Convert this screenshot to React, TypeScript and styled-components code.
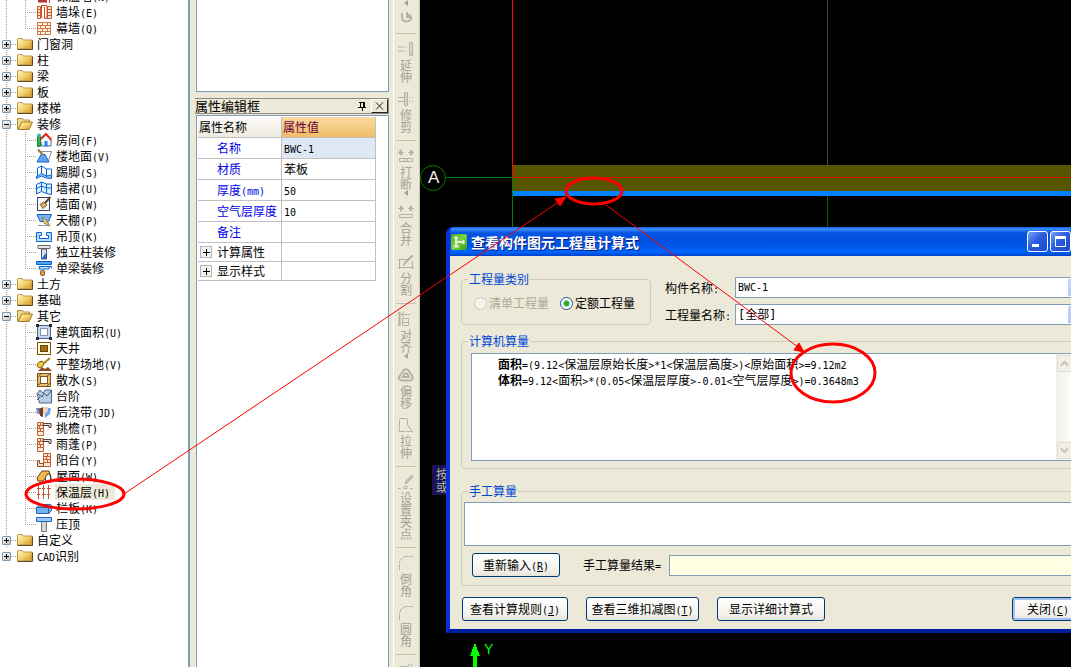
import React, { Fragment, ReactNode } from "react";
import styled, { createGlobalStyle, css } from "styled-components";

const GlobalStyle = createGlobalStyle`
  *, *::before, *::after { box-sizing: border-box; }
  body {
    margin: 0;
    background: #ece9d8;
    font-family: "Noto Sans CJK SC", sans-serif;
    font-size: 12px;
    line-height: 16px;
    color: #000;
  }
  ul { list-style: none; margin: 0; padding: 0; }
  button, input, select, textarea { font: inherit; color: inherit; margin: 0; }
`;

/* ---------- mixed Chinese / Latin text ---------- */

const Latin = styled.span`
  font-family: "DejaVu Sans Mono", monospace;
  font-size: 10px;
  line-height: 10px;
  white-space: pre;
`;

function Mixed({ text, hotkey }: { text: string; hotkey?: string }) {
  const parts = text.split(/([\x20-\x7e]+)/).filter(Boolean);
  return (
    <>
      {parts.map((part, i) => {
        if (!/^[\x20-\x7e]/.test(part)) return <Fragment key={i}>{part}</Fragment>;
        if (hotkey && part.includes(hotkey)) {
          const [before, after] = part.split(hotkey);
          return (
            <Latin key={i}>
              {before}
              <u>{hotkey}</u>
              {after}
            </Latin>
          );
        }
        return <Latin key={i}>{part}</Latin>;
      })}
    </>
  );
}

/* ---------- page ---------- */

const Page = styled.div`
  position: relative;
  display: grid;
  grid-template-columns: 190px 204px 26px minmax(0, 1fr);
  grid-template-rows: minmax(0, 1fr);
  height: 100vh;
  overflow: hidden;
`;

/* ---------- component tree ---------- */

const dots = "#a5a295";

const TreePanel = styled.nav`
  background: #fff;
  border-right: 2px solid #7f9db9;
  overflow: hidden;
`;

const Tree = styled.ul`
  margin-top: -12px;
`;

const Branch = styled.li<{ $last?: boolean }>`
  background: ${(p) =>
    p.$last
      ? "none"
      : `linear-gradient(${dots} 50%, transparent 50%) 6px 0 / 1px 2px repeat-y`};
`;

const TreeRow = styled.div`
  display: flex;
  align-items: center;
  height: 16px;
  padding-left: 2px;
`;

const Leaf = styled.li<{ $last?: boolean }>`
  display: flex;
  align-items: center;
  height: 16px;
  padding-left: 25px;
  background: ${(p) => (p.$last ? "linear-gradient(#fff, #fff) 25px 9px / 1px 7px no-repeat," : "")}
    linear-gradient(${dots} 50%, transparent 50%) 25px 0 / 1px 2px repeat-y;
`;

const Connector = styled.span<{ $width: number }>`
  flex: none;
  width: ${(p) => p.$width}px;
  height: 1px;
  background: repeating-linear-gradient(90deg, ${dots} 0 1px, transparent 1px 2px);
`;

const Expander = styled.button`
  flex: none;
  display: block;
  width: 9px;
  height: 9px;
  padding: 0;
  border: 1px solid #7898b5;
  border-radius: 1px;
  background: linear-gradient(135deg, #fff, #c9c2b1);
  svg { display: block; }
`;

const TreeLabel = styled.a<{ $selected?: boolean }>`
  margin-left: 3px;
  padding: 0 5px 0 1px;
  line-height: 16px;
  white-space: nowrap;
  color: #000;
  text-decoration: none;
  background: ${(p) => (p.$selected ? "#ece9d8" : "transparent")};
`;

const Glyph = styled.svg`
  flex: none;
  display: block;
`;

const FolderIcon = ({ open }: { open?: boolean }) => (
  <Glyph width="16" height="16" viewBox="0 0 16 16">
    <defs>
      <linearGradient id="fold" x1="0" y1="0" x2="1" y2="1">
        <stop offset="0" stopColor="#fff3b5" />
        <stop offset=".5" stopColor="#f6d36e" />
        <stop offset="1" stopColor="#c8922a" />
      </linearGradient>
    </defs>
    {open ? (
      <>
        <path d="M.5 13V2.500h5l1 1.500h6V6" fill="#f3dc8e" stroke="#b08c3e" />
        <path d="M1 13.500 4.500 6h11L12 13.500z" fill="url(#fold)" stroke="#a5762a" />
      </>
    ) : (
      <>
        <path d="M.5 13V3l1-.5h4l1 1.500h8.500V13z" fill="url(#fold)" stroke="#b8934a" />
        <path d="M.5 13.500h15V4.500" fill="none" stroke="#5f4a22" />
      </>
    )}
  </Glyph>
);

const orange = "#c0622c";

const drawings: Record<string, ReactNode> = {
  insulatedWall: (
    <>
      <path d="M2 13h8" stroke="#b03a2e" strokeWidth="3" />
      <path d="M10.500 0v15M13.500 0v15" stroke="#d33" />
    </>
  ),
  pier: (
    <>
      <path d="M1.500 2.500h3v12h-3zM11.500 2.500h4v12h-4z" fill="#fbe3cf" stroke={orange} />
      <path d="M1 5.500h4M1 8.500h4M1 11.500h4M11 5.500h4M11 8.500h4M11 11.500h4" stroke={orange} />
      <path d="M5 1.500h6v13H8.500V4M5.500 2v12M8.500 3v11" fill="none" stroke="#d4471c" />
    </>
  ),
  curtain: (
    <>
      <rect x="1.500" y="2.500" width="13" height="12" fill="#fff2e6" stroke="#cf7a45" />
      <path d="M1 5.500h14M1 8.500h14M1 11.500h14M6.500 3v3M11.500 3v3M4.500 6v3M9.500 6v3M6.500 9v3M11.500 9v3M4.500 12v3M9.500 12v3" stroke="#cf7a45" />
    </>
  ),
  room: (
    <>
      <path d="M4 8 10 3l5 5v6H6z" fill="#f3f8ff" stroke="#3a6cb0" />
      <path d="M4 7.500 10 2l5.500 6" fill="none" stroke="#e0301e" strokeWidth="2" />
      <path d="M1.500 4.500h3v10h-3z" fill="#37b24d" stroke="#1d7d33" />
      <path d="M8.500 9h3v5.500h-3z" fill="#2f7fe0" />
      <circle cx="3" cy="3.500" r="2" fill="#38b8a8" />
    </>
  ),
  floor: (
    <>
      <path d="M4.500 3.500h11l-3 9" fill="#fff" stroke="#8a94a3" />
      <path d="M5 6.500h4l4 7.500H1z" fill="#62a3f2" stroke="#1760c8" />
      <path d="M2 1.500 7 7" stroke="#9a7a3c" strokeWidth="2" />
    </>
  ),
  skirting: (
    <>
      <path d="M.5 12.500 5.500 9.500l5 2.500 5-1v3.500l-5-.5-5-2-5 2.500z" fill="#8cc8fa" stroke="#0d63d3" />
      <path d="M1.500 13V4L5.500 2v8M5.500 2l5 3h5v7M10.500 5v8" fill="none" stroke="#0d63d3" />
    </>
  ),
  dado: (
    <>
      <path d="M.5 4.500 5.500 2l5 2h5v10.500l-5-1-5-2-5 2.500z" fill="#d9effe" stroke="#0d63d3" />
      <path d="M.5 8.500 5.500 6l5 2h5M5.500 2v9M10.500 4v9" fill="none" stroke="#0d63d3" />
    </>
  ),
  wallFace: (
    <>
      <rect x="1.500" y="1.500" width="12" height="13" fill="#f3f6ff" stroke="#3c4660" />
      <path d="M4 8.500 8 6l3 3-4 3.500z" fill="#d5b064" stroke="#866426" />
      <path d="M9 7l5.500-6" stroke="#5c4a28" strokeWidth="2" />
    </>
  ),
  ceiling: (
    <>
      <path d="M1 2.500h14.500l-3 7H4z" fill="#78b2f6" stroke="#1760c8" />
      <path d="M2 13.500h12" stroke="#8a94a3" />
      <path d="M6 5l4 3 4 6-6-3z" fill="#ead07c" stroke="#9a7a3c" />
    </>
  ),
  suspended: (
    <path d="M.5 4.500h5v3h-2v3h9v-3h-2v-3h5v9H.5z" fill="#b8dcfb" stroke="#0d63d3" />
  ),
  column: (
    <>
      <path d="M2 1.500h12v3H2z" fill="#e8e8e8" stroke="#666" />
      <path d="M5.500 5h5v10h-5z" fill="#cfe0f5" stroke="#556" />
      <path d="M6 14l4-5v6H6z" fill="#1f6fd0" />
    </>
  ),
  beam: (
    <>
      <path d="M.5 1.500h15v3H.5z" fill="#4fa0f4" stroke="#0d5fc8" />
      <path d="M3 6.500h10v2.500H3z" fill="#cde4fb" stroke="#0d63d3" />
      <path d="M13 6.500h2.500v2" fill="none" stroke="#0d63d3" />
      <rect x="4.500" y="10.500" width="4" height="5" rx="1" fill="#d69a58" stroke="#8d5a24" />
    </>
  ),
  area: (
    <>
      <rect x="1.500" y="1.500" width="13" height="13" fill="#c8d8ee" stroke="#50627d" />
      <rect x="4.500" y="4.500" width="7" height="7" fill="#fff" stroke="#8294ad" />
      <path d="M0 0h3v3H0zM13 0h3v3h-3zM0 13h3v3H0zM13 13h3v3h-3z" fill="#222b3a" />
    </>
  ),
  patio: (
    <>
      <rect x="1.500" y="2.500" width="13" height="12" fill="#fff7e0" stroke="#7c5514" />
      <rect x="4.500" y="5.500" width="7" height="6" fill="#a06f14" stroke="#6b470a" />
    </>
  ),
  levelling: (
    <>
      <path d="M2 15l4-4 3 2 3-2 4 4z" fill="#8d4a1e" />
      <path d="M7 8l7-6" stroke="#a98522" strokeWidth="2" />
      <ellipse cx="4.500" cy="8.500" rx="3.500" ry="2.500" fill="#f2cf3a" stroke="#8a6c12" transform="rotate(-40 4.500 8.500)" />
    </>
  ),
  apron: (
    <>
      <rect x="1.500" y="1.500" width="13" height="13" fill="#e8bf78" stroke="#7c5514" />
      <rect x="4.500" y="4.500" width="7" height="7" fill="#fff" stroke="#7c5514" />
      <path d="M2 5l3-3M2 13l3-2M11 4l3-2M11 14l3-3" stroke="#7c5514" />
    </>
  ),
  steps: (
    <>
      <path d="M1 5.500 4 2l3 3 2-3h6.500v13H3.500z" fill="#b9cde6" stroke="#4d6585" />
      <path d="M2 6l4 3 2-4 3 3 4-5M1 12l3-3" fill="none" stroke="#3e5575" />
    </>
  ),
  strip: (
    <>
      <path d="M0 4h5v6H1z" fill="#7b8fc0" />
      <path d="M8 4h7l-1 6-5 4z" fill="#6ea6ea" />
      <path d="M3 5l4-2v10l-3-1z" fill="#7a3e1c" />
      <path d="M7 3h5v4l-3 3H7z" fill="#e9d7c4" />
    </>
  ),
  eaves: (
    <>
      <path d="M1.500 2.500h6v13h-6z" fill="#fde6d6" stroke={orange} />
      <path d="M1 5.500h6M1 8.500h6M1 11.500h6M4.500 3v3M3.500 6v3M4.500 9v3" stroke={orange} />
      <path d="M7 3.500h8v4h-2v-2H7z" fill="#e9ded2" stroke="#5d4434" />
    </>
  ),
  balcony: (
    <>
      <path d="M7.500 1.500h7v13h-7z" fill="#fde6d6" stroke={orange} />
      <path d="M7 4.500h8M7 7.500h8M7 10.500h8M11.500 2v3M10.500 5v3M11.500 8v3" stroke={orange} />
      <path d="M1.500 8.500h2v3h4v3h-6z" fill="#f6d9c4" stroke="#8c4a24" />
    </>
  ),
  roof: (
    <>
      <path d="M1 10 6 3h7l2 6v5h-5V9l-3 4H2z" fill="#f5b64c" stroke="#6a4515" />
      <path d="M9.500 9l3-4 2 4v5h-5z" fill="#fff" stroke="#444" />
    </>
  ),
  insulation: (
    <path d="M2.500 1v14M7.500 1v14M12.500 1v14M1 4.500h4M6 4.500h3M11 4.500h4M1 10.500h3M6 10.500h4M11 10.500h3" stroke="#c0562c" fill="none" />
  ),
  railing: (
    <>
      <path d="M.5 7.500 4 4.500h10l1.500 1v5l-2.500 3H.5z" fill="#6fb4f2" stroke="#2868a8" />
      <path d="M.5 7.500h12v6M12.500 7.500l3-2" fill="none" stroke="#2868a8" />
    </>
  ),
  coping: (
    <>
      <path d="M5.500 5h5v10.500h-5z" fill="#d8d8d8" stroke="#777" />
      <path d="M.5 1.500h15v4H.5z" fill="#9ccbfb" stroke="#1666cc" />
    </>
  ),
};

type LeafData = [icon: string, label: string];
type GroupData = { label: string; children?: LeafData[] };

const wallLeaves: LeafData[] = [
  ["insulatedWall", "保温墙(N)"],
  ["pier", "墙垛(E)"],
  ["curtain", "幕墙(Q)"],
];

const groups: GroupData[] = [
  { label: "门窗洞" },
  { label: "柱" },
  { label: "梁" },
  { label: "板" },
  { label: "楼梯" },
  {
    label: "装修",
    children: [
      ["room", "房间(F)"],
      ["floor", "楼地面(V)"],
      ["skirting", "踢脚(S)"],
      ["dado", "墙裙(U)"],
      ["wallFace", "墙面(W)"],
      ["ceiling", "天棚(P)"],
      ["suspended", "吊顶(K)"],
      ["column", "独立柱装修"],
      ["beam", "单梁装修"],
    ],
  },
  { label: "土方" },
  { label: "基础" },
  {
    label: "其它",
    children: [
      ["area", "建筑面积(U)"],
      ["patio", "天井"],
      ["levelling", "平整场地(V)"],
      ["apron", "散水(S)"],
      ["steps", "台阶"],
      ["strip", "后浇带(JD)"],
      ["eaves", "挑檐(T)"],
      ["eaves", "雨蓬(P)"],
      ["balcony", "阳台(Y)"],
      ["roof", "屋面(W)"],
      ["insulation", "保温层(H)"],
      ["railing", "栏板(K)"],
      ["coping", "压顶"],
    ],
  },
  { label: "自定义" },
  { label: "CAD识别" },
];

const Leaves = ({ items }: { items: LeafData[] }) => (
  <ul>
    {items.map(([icon, label], i) => (
      <Leaf key={label} $last={i === items.length - 1}>
        <Connector $width={11} />
        <Glyph width="16" height="16" viewBox="0 0 16 16" fill="none">
          {drawings[icon]}
        </Glyph>
        <TreeLabel href="#" $selected={icon === "insulation"}>
          <Mixed text={label} />
        </TreeLabel>
      </Leaf>
    ))}
  </ul>
);

const ComponentTree = () => (
  <TreePanel aria-label="构件">
    <Tree>
      <Branch>
        <Leaves items={wallLeaves} />
      </Branch>
      {groups.map((g, i) => (
        <Branch key={g.label} $last={i === groups.length - 1}>
          <TreeRow>
            <Expander aria-label={g.label}>
              <svg width="7" height="7" viewBox="0 0 7 7">
                <path d={g.children ? "M1 3.500h5" : "M1 3.500h5M3.500 1v5"} stroke="#000" />
              </svg>
            </Expander>
            <Connector $width={6} />
            <FolderIcon open={!!g.children} />
            <TreeLabel href="#">
              <Mixed text={g.label} />
            </TreeLabel>
          </TreeRow>
          {g.children && <Leaves items={g.children} />}
        </Branch>
      ))}
    </Tree>
  </TreePanel>
);

/* ---------- property editor ---------- */

const PropertyColumn = styled.section`
  display: flex;
  flex-direction: column;
  padding: 0 4px 0 5px;
  border-right: 1px solid #fff;
`;

const ListBox = styled.div`
  flex: none;
  height: 92px;
  margin: 0 0 0 1px;
  background: #fff;
  border: solid #7f9db9;
  border-width: 0 1px 1px;
`;

const PanelTitle = styled.header`
  display: flex;
  align-items: center;
  height: 16px;
  margin: 6px 0 1px;
  border: 1px solid #8d8b80;
  border-left: 0;
  h2 { flex: 1; margin: 0; font-size: 13px; font-weight: 400; line-height: 14px; }
  svg { display: block; }
`;

const PinButton = styled.button`
  width: 16px;
  height: 14px;
  padding: 0;
  border: 0;
  background: none;
`;

const CloseTool = styled.button`
  width: 17px;
  height: 14px;
  margin-left: 2px;
  padding: 0 3px;
  border: 1px solid;
  border-color: #fff #222 #222 #fff;
  background: #ece9d8;
`;

const PropertyBox = styled.div`
  flex: 1;
  margin-left: 1px;
  padding: 1px 0 0 1px;
  background: #fff;
  border: solid #7f9db9;
  border-width: 1px 1px 0;
`;

const PropertyTable = styled.table`
  width: 178px;
  border-collapse: separate;
  border-spacing: 0;
  table-layout: fixed;
`;

const cell = css`
  height: 21px;
  padding: 0 0 0 2px;
  border: solid #c0c0c0;
  border-width: 0 1px 1px 0;
  font-weight: 400;
  line-height: 16px;
  text-align: left;
  white-space: nowrap;
`;

const HeadCell = styled.th<{ $value?: boolean }>`
  ${cell}
  width: ${(p) => (p.$value ? "94px" : "84px")};
  padding-left: 1px;
  color: ${(p) => (p.$value ? "#6b0040" : "#000")};
  background: ${(p) =>
    p.$value
      ? "linear-gradient(#f9dba5, #f0bd62)"
      : "linear-gradient(#fdfcfa, #eeeade)"};
`;

const NameCell = styled.th`
  ${cell}
  padding-left: 19px;
  color: #0000e8;
`;

const ValueCell = styled.td<{ $active?: boolean }>`
  ${cell}
  background: ${(p) => (p.$active ? "#dfe9f6" : "#fff")};
`;

const GroupCell = styled.th`
  ${cell}
  height: 19px;
  line-height: 14px;
`;

const GroupFlex = styled.span`
  display: flex;
  align-items: center;
  gap: 5px;
`;

const GroupToggle = styled.button`
  width: 12px;
  height: 12px;
  padding: 0;
  border: 1px solid #b5b5b5;
  background: #f2f2f0;
  svg { display: block; }
`;

const properties = [
  ["名称", "BWC-1"],
  ["材质", "苯板"],
  ["厚度(mm)", "50"],
  ["空气层厚度", "10"],
  ["备注", ""],
];

const PropertyEditor = () => (
  <PropertyColumn>
    <ListBox />
    <PanelTitle>
      <h2>属性编辑框</h2>
      <PinButton aria-label="固定">
        <svg width="16" height="14" viewBox="0 0 16 14" fill="none" stroke="#000">
          <path d="M6 3.500h6M7.500 3v5M5 8.500h8M9.500 9v3" />
          <path d="M11 3v5" strokeWidth="2" />
        </svg>
      </PinButton>
      <CloseTool aria-label="关闭">
        <svg width="9" height="12" viewBox="0 0 9 12" stroke="#222">
          <path d="M1 2.500 8 9.500M8 2.500 1 9.500" />
        </svg>
      </CloseTool>
    </PanelTitle>
    <PropertyBox>
      <PropertyTable>
        <thead>
          <tr>
            <HeadCell scope="col">属性名称</HeadCell>
            <HeadCell scope="col" $value>属性值</HeadCell>
          </tr>
        </thead>
        <tbody>
          {properties.map(([name, value], i) => (
            <tr key={name}>
              <NameCell scope="row"><Mixed text={name} /></NameCell>
              <ValueCell $active={i === 0}><Mixed text={value} /></ValueCell>
            </tr>
          ))}
          {["计算属性", "显示样式"].map((name) => (
            <tr key={name}>
              <GroupCell scope="row">
                <GroupFlex>
                  <GroupToggle aria-label={name}>
                    <svg width="10" height="10" viewBox="0 0 10 10" stroke="#000">
                      <path d="M2 5.500h7M5.500 2v7" />
                    </svg>
                  </GroupToggle>
                  {name}
                </GroupFlex>
              </GroupCell>
              <GroupCell as="td" />
            </tr>
          ))}
        </tbody>
      </PropertyTable>
    </PropertyBox>
  </PropertyColumn>
);

/* ---------- edit toolbar ---------- */

const Toolbar = styled.div`
  display: flex;
  flex-direction: column;
  align-items: center;
  padding-right: 1px;
  border-right: 1px solid #c9c5b2;
  overflow: hidden;
`;

const Tool = styled.button`
  flex: none;
  display: flex;
  flex-direction: column;
  align-items: center;
  gap: 2px;
  width: 20px;
  padding: 4px 0;
  border: 0;
  background: none;
  color: #a5a293;
  font-size: 12px;
  line-height: 12px;
`;

const ToolText = styled.span<{ $menu?: boolean }>`
  display: block;
  width: 12px;
  margin-bottom: ${(p) => (p.$menu ? "-2px" : "0")};
  word-break: break-all;
`;

const Divider = styled.hr`
  flex: none;
  width: 20px;
  height: 1px;
  margin: 3px 0;
  border: 0;
  background: #c5c1ac;
`;

const MenuArrow = () => (
  <Glyph width="8" height="6" viewBox="0 0 8 6">
    <path d="M6 0v6L2 3z" fill="#a5a293" />
  </Glyph>
);

const toolDrawings: Record<string, ReactNode> = {
  redo: <path d="M4 3v4a4.500 4 0 0 0 9 1V7a3 3 0 0 0-4-2M9 2v5h3" strokeWidth="2" />,
  extend: (
    <>
      <path d="M0 6h6M0 10h6M8 6h1M8 10h1" strokeWidth="1" />
      <path d="M11.500 1.500h3v13h-3z" fill="#d8d5c6" />
    </>
  ),
  trim: (
    <>
      <path d="M0 6.500h6M0 10.500h6M11 6.500h1M14 6.500h1M11 10.500h1M14 10.500h1" />
      <path d="M6.500 1.500h3v13h-3z" fill="#d8d5c6" />
    </>
  ),
  breakUp: (
    <>
      <path d="M0 4.500 4 1v7zM16 4.500 12 1v7z" fill="#b5b2a2" stroke="none" />
      <path d="M3 4.500h3M10 4.500h3M1.500 10.500h13v3h-13zM6.500 11v2M9.500 11v2" />
    </>
  ),
  merge: (
    <>
      <path d="M6 4.500 2 1v7zM10 4.500 14 1v7z" fill="#b5b2a2" stroke="none" />
      <path d="M0 4.500h3M13 4.500h3M1.500 10.500h13v3h-13z" />
    </>
  ),
  split: (
    <>
      <path d="M0 5.500h9M0 13.500h16M1.500 5v10M14.500 7v8" />
      <path d="M5 12l2-4 7-7 1 1-7 7z" fill="#b5b2a2" />
    </>
  ),
  align: (
    <>
      <path d="M1.500 1v14" strokeWidth="2" />
      <path d="M3 3.500h9M6 1 3 3.500 6 6M4.500 7.500h6v7h-6zM4 11.500h7" />
    </>
  ),
  offset: <path d="M5.500 3.500a3 3 0 0 1 5 0l4 6c1 3-1 4-3 4h-7c-3 0-4-2-3-4zM7 6.500l-2 3.500h6L9 6.500z" strokeWidth="2" />,
  stretch: <path d="M9 1.500H1.500v13H15M9.500 2v5M9 7l5 7" strokeDasharray="8 1" />,
  grip: (
    <>
      <path d="M0 14.500h3M12 14.500h3M6 12.500h3v2H6z" />
      <path d="M7 10l1-3 6-6 1 2-6 6z" fill="#c9c6b6" />
    </>
  ),
  chamfer: <path d="M1.500 15V6l5-4.500H15" strokeDasharray="6 1" />,
  fillet: <path d="M1.500 15v-5q0-8 8-8.500H15" strokeDasharray="6 1" />,
  copy: <path d="M1.500 4.500h9v6M12 2a2 2 0 1 0 .1 0" />,
};

const tools: ([icon: string, label: string, menu?: boolean] | null)[] = [
  ["redo", ""],
  null,
  ["extend", "延伸"],
  ["trim", "修剪"],
  null,
  ["breakUp", "打断", true],
  ["merge", "合并"],
  ["split", "分割"],
  null,
  ["align", "对齐", true],
  ["offset", "偏移"],
  ["stretch", "拉伸"],
  null,
  ["grip", "设置夹点"],
  null,
  ["chamfer", "倒角"],
  ["fillet", "圆角"],
  null,
  ["copy", ""],
];

const EditToolbar = () => (
  <Toolbar role="toolbar">
    <MenuArrow />
    {tools.map((t, i) =>
      t ? (
        <Tool key={i} aria-label={t[1] || t[0]}>
          <Glyph width="16" height="16" viewBox="0 0 16 16" fill="none" stroke="#b5b2a2">
            {toolDrawings[t[0]]}
          </Glyph>
          {t[1] && <ToolText $menu={t[2]}>{t[1]}</ToolText>}
          {t[2] && <MenuArrow />}
        </Tool>
      ) : (
        <Divider key={i} />
      )
    )}
  </Toolbar>
);

/* ---------- drawing canvas ---------- */

const Canvas = styled.main`
  position: relative;
  background: #000;
  overflow: hidden;
`;

const CanvasDrawing = styled.svg`
  position: absolute;
  inset: 0;
  width: 100%;
  height: 100%;
`;

const CanvasHint = styled.div`
  position: absolute;
  left: 12px;
  top: 465px;
  width: 40px;
  height: 30px;
  padding: 2px 0 0 4px;
  background: #191555;
  color: #b9b7a6;
  font-size: 12px;
  line-height: 13px;
`;

const Drawing = () => (
  <CanvasDrawing fill="none" shapeRendering="crispEdges">
    <rect x="93" y="165" width="100%" height="26" fill="#565500" />
    <rect x="93" y="191" width="100%" height="5" fill="#0080ff" />
    <rect x="92" y="177" width="1" height="60" fill="#008000" />
    <rect x="26" y="177" width="66" height="1" fill="#008000" />
    <rect x="407" y="0" width="1" height="165" fill="#4a4a4a" />
    <rect x="407" y="196" width="1" height="40" fill="#006400" />
    <rect x="93" y="177" width="100%" height="1" fill="#d01400" />
    <rect x="92" y="0" width="1" height="177" fill="#f00" />
    <circle cx="13" cy="178" r="12.500" stroke="#008000" shapeRendering="auto" />
    <text x="8" y="183" fill="#eee" fontFamily="Liberation Sans, sans-serif" fontSize="17">A</text>
    <path d="M55 643l5 13h-3v12h-4v-12h-3z" fill="#0f0" />
    <text x="64" y="654" fill="#0f0" fontFamily="Liberation Sans, sans-serif" fontSize="14">Y</text>
  </CanvasDrawing>
);

/* ---------- dialog ---------- */

const DialogFrame = styled.section`
  position: absolute;
  left: 26px;
  right: -26px;
  top: 227px;
  border-radius: 7px 7px 0 0;
  background: #0a4fe0;
  border: solid #0831d9;
  border-width: 0 4px 4px;
  border-color: #0831d9 #0831d9 #001ea0;
  overflow: hidden;
`;

const TitleBar = styled.header`
  display: flex;
  align-items: center;
  height: 29px;
  margin: 0 -4px;
  padding: 0 3px 0 5px;
  background: linear-gradient(#0a5ce8 0, #3c90ff 2px, #0653e0 6px, #0054e3 18px, #0066ff 25px, #0040c8 29px);
  h1 {
    flex: 1;
    margin: 0 0 0 4px;
    color: #fff;
    font-size: 14px;
    font-weight: 700;
    line-height: 20px;
    text-shadow: 1px 1px 0 #0a1883;
    white-space: nowrap;
  }
`;

const CaptionButton = styled.button<{ $close?: boolean }>`
  flex: none;
  width: 21px;
  height: 21px;
  margin-left: 2px;
  padding: 0;
  border: 1px solid #fff;
  border-radius: 3px;
  background: ${(p) => (p.$close ? "#d8502c" : "linear-gradient(135deg, #7aa0f4, #2a5ce0 45%, #1d49c8)")};
  svg { display: block; }
`;

const Body = styled.div`
  padding: 16px 7px 8px 11px;
  background: #ece9d8;
`;

const TopRow = styled.div`
  display: flex;
  gap: 14px;
`;

const Group = styled.fieldset`
  min-width: 0;
  margin: 0;
  border: 1px solid #cfccba;
  border-radius: 4px;
  padding: 0;
  legend {
    margin-left: 6px;
    padding: 0 1px;
    color: #0046d5;
    line-height: 14px;
  }
`;

const KindGroup = styled(Group)`
  flex: none;
  width: 190px;
  padding: 9px 0 13px;
`;

const RadioRow = styled.div`
  display: flex;
  height: 16px;
  padding-left: 12px;
  gap: 11px;
`;

const RadioLabel = styled.label<{ $off?: boolean }>`
  display: flex;
  align-items: center;
  gap: 2px;
  color: ${(p) => (p.$off ? "#aca899" : "#000")};
  white-space: nowrap;
  input {
    appearance: none;
    width: 13px;
    height: 13px;
    border: 1px solid ${(p) => (p.$off ? "#cac8bb" : "#1d5281")};
    border-radius: 50%;
    background: #f4f3ec;
  }
  input:checked {
    background: radial-gradient(circle, #2da82d 0 2px, #fff 4px);
  }
`;

const Fields = styled.div`
  flex: 1;
  display: grid;
  grid-template-columns: 70px minmax(0, 1fr);
  grid-auto-rows: 21px;
  row-gap: 6px;
  align-items: center;
  padding-top: 5px;
`;

const Combo = styled.select<{ $latin?: boolean }>`
  appearance: none;
  width: 100%;
  height: 21px;
  padding: 0 20px 0 2px;
  border: 1px solid #7f9db9;
  border-radius: 0;
  background: linear-gradient(#c8d8fb, #b4c8f6) right 1px center / 16px 17px no-repeat #fff;
  font-family: "DejaVu Sans Mono", "Noto Sans CJK SC", monospace;
  font-size: ${(p) => (p.$latin ? "10px" : "12px")};
`;

const ComputedGroup = styled(Group)`
  margin-top: 9px;
  padding: 5px 0 7px;
`;

const Formulas = styled.div`
  display: flex;
  height: 108px;
  margin: 0 11px 0 9px;
  background: #fff;
  border: 1px solid #7f9db9;
`;

const FormulaText = styled.div`
  flex: 1;
  min-width: 0;
  padding: 2px 0 0 26px;
  white-space: nowrap;
  overflow: hidden;
  p { margin: 0; height: 16px; line-height: 16px; }
`;

const ScrollTrack = styled.div`
  display: flex;
  flex-direction: column;
  justify-content: space-between;
  width: 17px;
  padding: 1px;
  background: linear-gradient(90deg, #f0efe8, #fefefb);
`;

const ScrollButton = styled.button`
  height: 17px;
  padding: 0;
  border: 1px solid #dddbcd;
  border-radius: 2px;
  background: #f1efe6;
  svg { display: block; }
`;

const ManualGroup = styled(Group)`
  margin-top: 15px;
  padding: 4px 0 8px;
`;

const ManualBody = styled.div`
  padding: 0 2px;
`;

const ManualInput = styled.textarea`
  display: block;
  width: 100%;
  height: 44px;
  resize: none;
  border: 1px solid #7f9db9;
  border-radius: 0;
  background: #fff;
`;

const ManualRow = styled.div`
  display: flex;
  align-items: center;
  margin-top: 7px;
  padding: 0 10px 0 8px;
  label { flex: none; margin: 0 8px 0 23px; }
`;

const ResultInput = styled.input`
  flex: 1;
  min-width: 0;
  height: 21px;
  border: 1px solid #7f9db9;
  background: #ffffe1;
`;

const PushButton = styled.button<{ $width: number; $default?: boolean }>`
  flex: none;
  width: ${(p) => p.$width}px;
  height: 24px;
  padding: 0;
  border: 1px solid #003c74;
  border-radius: 3px;
  background: linear-gradient(#fff, #f4f3ee 70%, #e6e3d8);
  line-height: 20px;
  white-space: nowrap;
  ${(p) => p.$default && "box-shadow: inset 0 0 0 2px #a6c0f2;"}
`;

const Footer = styled.footer`
  display: flex;
  gap: 18px;
  margin-top: 11px;
  padding: 0 2px 0 1px;
  ${PushButton}:last-child { margin-left: auto; }
`;

const CalculationDialog = () => (
  <DialogFrame role="dialog" aria-labelledby="dialog-title">
    <TitleBar>
      <Glyph width="16" height="16" viewBox="0 0 16 16">
        <defs>
          <linearGradient id="app" x1="0" y1="0" x2="1" y2="1">
            <stop offset="0" stopColor="#3fae2a" />
            <stop offset=".5" stopColor="#7fd63c" />
            <stop offset="1" stopColor="#2c9a1c" />
          </linearGradient>
        </defs>
        <rect width="16" height="16" rx="2" fill="url(#app)" />
        <path d="M5 3v10M3 12.500h5M3 3.500h4M6 8h7M12.500 6v4" stroke="#e4eedd" strokeWidth="2" />
      </Glyph>
      <h1 id="dialog-title">查看构件图元工程量计算式</h1>
      <CaptionButton aria-label="最小化">
        <svg width="19" height="19" viewBox="0 0 19 19">
          <path d="M4 13.500h7" stroke="#fff" strokeWidth="3" />
        </svg>
      </CaptionButton>
      <CaptionButton aria-label="最大化">
        <svg width="19" height="19" viewBox="0 0 19 19" fill="none" stroke="#fff">
          <path d="M4.500 5v9.500h10V5" />
          <path d="M4 5.500h11" strokeWidth="3" />
        </svg>
      </CaptionButton>
      <CaptionButton aria-label="关闭" $close>
        <svg width="19" height="19" viewBox="0 0 19 19" stroke="#fff" strokeWidth="2">
          <path d="M5 5l9 9M14 5l-9 9" />
        </svg>
      </CaptionButton>
    </TitleBar>
    <Body>
      <TopRow>
        <KindGroup>
          <legend>工程量类别</legend>
          <RadioRow>
            <RadioLabel $off>
              <input type="radio" name="kind" disabled />
              清单工程量
            </RadioLabel>
            <RadioLabel>
              <input type="radio" name="kind" defaultChecked />
              定额工程量
            </RadioLabel>
          </RadioRow>
        </KindGroup>
        <Fields>
          <label htmlFor="part"><Mixed text="构件名称:" /></label>
          <Combo id="part" $latin>
            <option>BWC-1</option>
          </Combo>
          <label htmlFor="quantity"><Mixed text="工程量名称:" /></label>
          <Combo id="quantity">
            <option>[全部]</option>
          </Combo>
        </Fields>
      </TopRow>

      <ComputedGroup>
        <legend>计算机算量</legend>
        <Formulas>
          <FormulaText>
            <p>
              <b>面积</b>
              <Mixed text="=(9.12<保温层原始长度>*1<保温层高度>)<原始面积>=9.12m2" />
            </p>
            <p>
              <b>体积</b>
              <Mixed text="=9.12<面积>*(0.05<保温层厚度>-0.01<空气层厚度>)=0.3648m3" />
            </p>
          </FormulaText>
          <ScrollTrack>
            <ScrollButton aria-label="向上滚动">
              <svg width="13" height="15" viewBox="0 0 13 15" fill="none" stroke="#c5c3b6" strokeWidth="2">
                <path d="M3 9.500 6.500 6 10 9.500" />
              </svg>
            </ScrollButton>
            <ScrollButton aria-label="向下滚动">
              <svg width="13" height="15" viewBox="0 0 13 15" fill="none" stroke="#c5c3b6" strokeWidth="2">
                <path d="M3 5.500 6.500 9 10 5.500" />
              </svg>
            </ScrollButton>
          </ScrollTrack>
        </Formulas>
      </ComputedGroup>

      <ManualGroup>
        <legend>手工算量</legend>
        <ManualBody>
          <ManualInput aria-label="手工算量" />
          <ManualRow>
            <PushButton $width={88}><Mixed text="重新输入(R)" hotkey="R" /></PushButton>
            <label htmlFor="result"><Mixed text="手工算量结果=" /></label>
            <ResultInput id="result" readOnly />
          </ManualRow>
        </ManualBody>
      </ManualGroup>

      <Footer>
        <PushButton $width={106}><Mixed text="查看计算规则(J)" hotkey="J" /></PushButton>
        <PushButton $width={113}><Mixed text="查看三维扣减图(T)" hotkey="T" /></PushButton>
        <PushButton $width={108}>显示详细计算式</PushButton>
        <PushButton $width={72} $default><Mixed text="关闭(C)" hotkey="C" /></PushButton>
      </Footer>
    </Body>
  </DialogFrame>
);

/* ---------- red callouts over everything ---------- */

const Callouts = styled.svg`
  position: absolute;
  inset: 0;
  width: 100%;
  height: 100%;
  pointer-events: none;
`;

export default function App() {
  return (
    <>
      <GlobalStyle />
      <Page>
        <ComponentTree />
        <PropertyEditor />
        <EditToolbar />
        <Canvas>
          <Drawing />
          <CanvasHint>按<br />或</CanvasHint>
          <CalculationDialog />
        </Canvas>
        <Callouts fill="none" stroke="#f00">
          <g strokeWidth="3">
            <ellipse cx="75" cy="494" rx="49" ry="15" />
            <ellipse cx="594" cy="191" rx="28" ry="13" />
            <ellipse cx="833" cy="373" rx="42" ry="29" />
          </g>
          <path d="M124 494 560 201M606 205 798 347" />
          <path d="M566 197l-6 9-5-7zM804 352l-10-2 5-7z" fill="#f00" />
        </Callouts>
      </Page>
    </>
  );
}
